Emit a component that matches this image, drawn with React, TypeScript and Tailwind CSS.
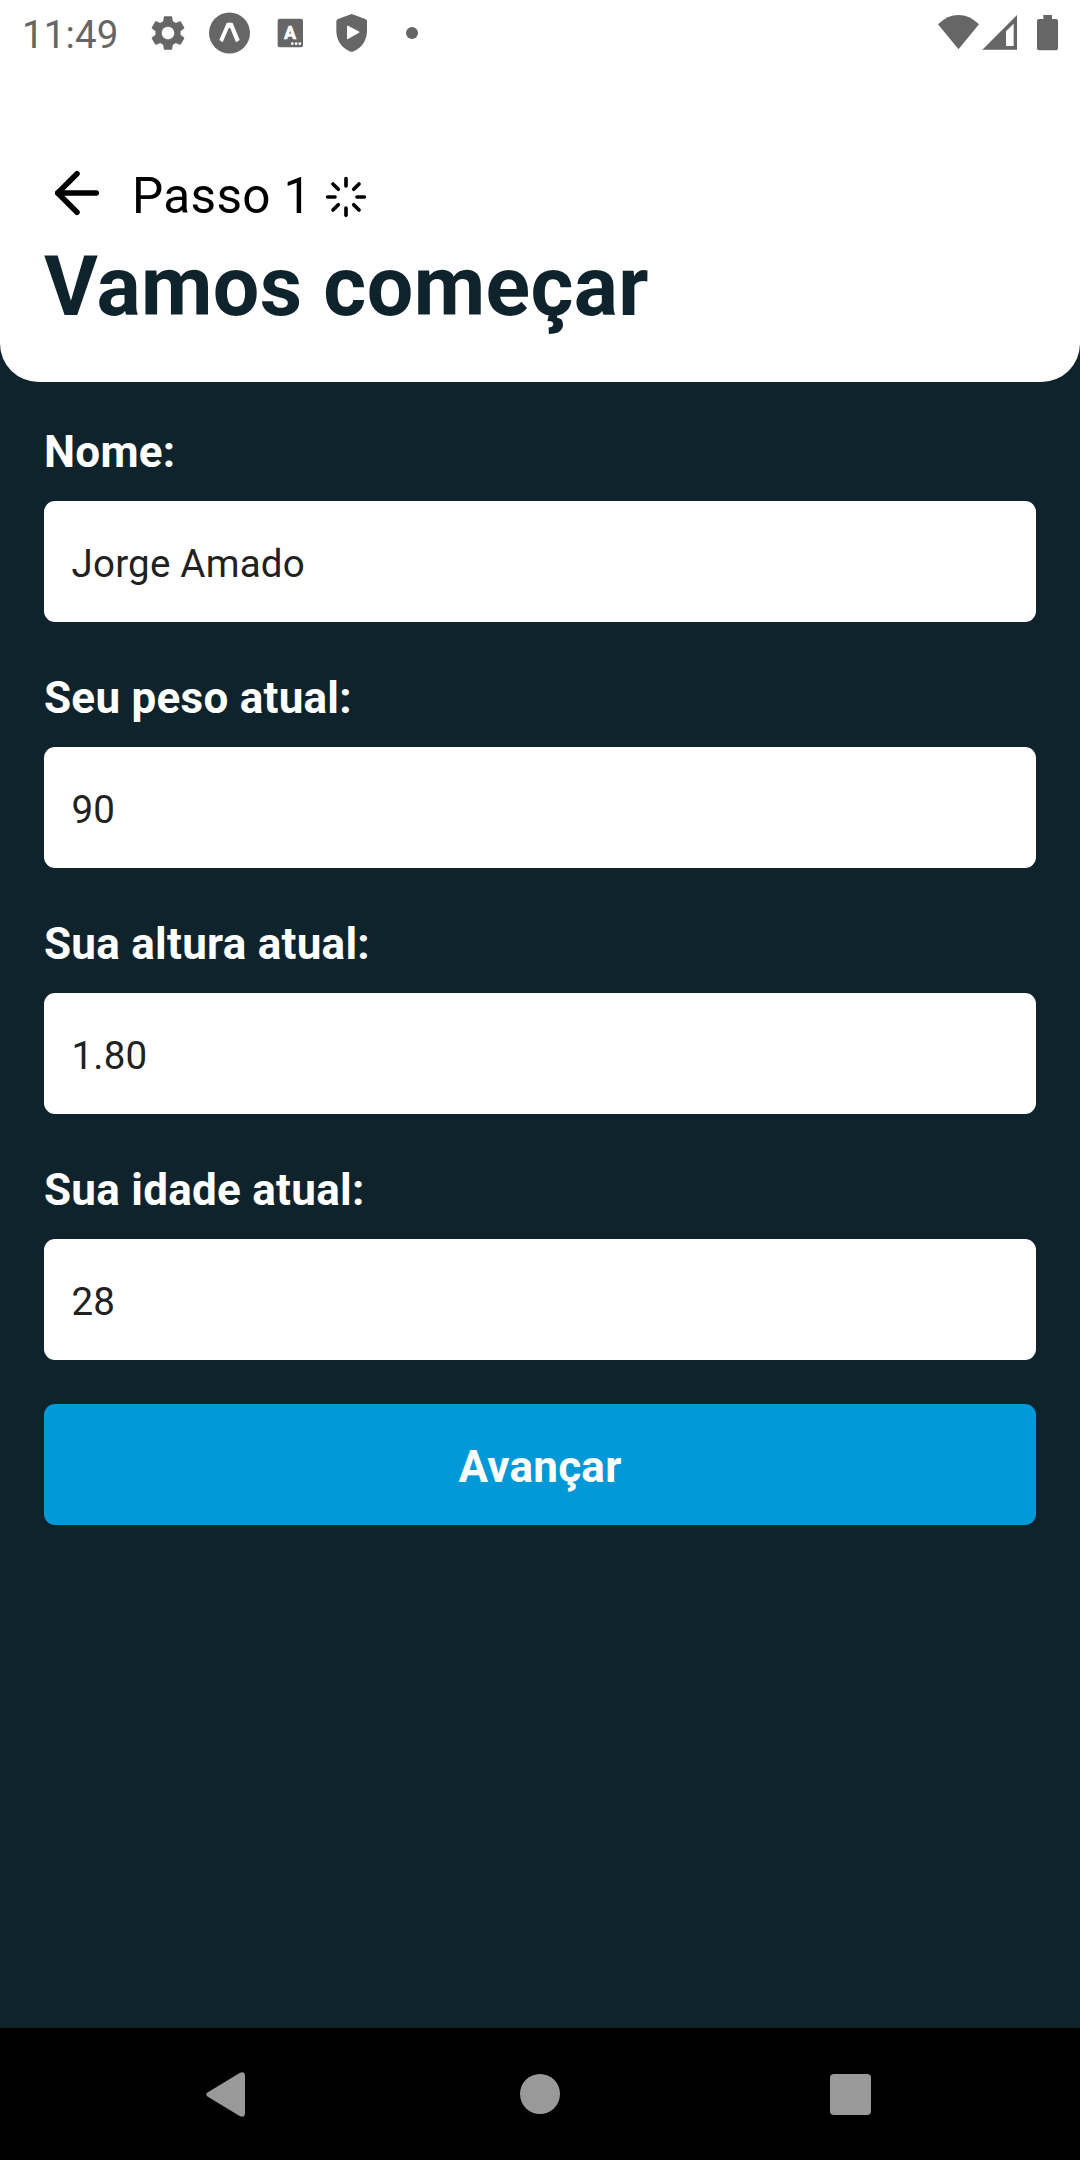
import { useState } from "react";
import { ArrowLeft, Loader } from "lucide-react";
import { MdSettings } from "react-icons/md";

function StatusBar() {
  return (
    <div className="flex h-[66px] items-start justify-between pl-[22px] text-[#666666]">
      <div className="flex h-[66px] items-center">
        <span className="relative top-[2px] w-[125px] text-[38.5px] leading-[46px] tracking-[0.15px]">11:49</span>
        <MdSettings className="h-[42px] w-[42px]" />
        <svg className="ml-5 h-[42px] w-[41px]" viewBox="27 37 123 126">
          <circle cx="88.5" cy="100" r="61.5" fill="currentColor" />
          <path
            d="M80 70 Q89 67 98 70 L119 121 L108 128 L91 86 Q89 82 86 86 L68 128 L58 121 Z"
            fill="white"
          />
        </svg>
        <svg className="ml-[27px] h-[42px] w-[27px]" viewBox="231 37 81 126">
          <rect x="233" y="57" width="76" height="86" rx="6" fill="currentColor" />
          <text
            x="270.5"
            y="118"
            textAnchor="middle"
            fontSize="54"
            fontWeight="700"
            fill="white"
            stroke="white"
            strokeWidth="2"
            strokeLinejoin="round"
            fontFamily="Roboto, sans-serif"
          >
            A
          </text>
          <circle cx="277" cy="132" r="4" fill="white" />
          <circle cx="288.500" cy="132" r="4" fill="white" />
          <circle cx="299.500" cy="132" r="4" fill="white" />
        </svg>
        <svg className="ml-8 h-[42px] w-[31px]" viewBox="407 37 93 126">
          <path
            d="M454 43 L495 58 Q500 60 500 65 V95 Q498 138 460 155 Q454 158 448 155 Q410 138 408 95 V65 Q408 60 413 58 Z"
            fill="currentColor"
          />
          <path d="M442 80 L475 97.500 L442 116 Z" fill="white" stroke="white" strokeWidth="4" strokeLinejoin="round" />
        </svg>
        <span className="ml-[39px] h-3 w-3 rounded-full bg-[#666666]" />
      </div>
      <svg className="h-[66px] w-[160px]" viewBox="0 0 480 198" fill="currentColor">
        <path d="M115.500 148 L54 73 Q82 45 115.500 45 Q149 45 177 73 Z" />
        <path d="M291 45 V149.500 H187 Z M281 71 L258 94 V138 H281 Z" fillRule="evenodd" />
        <path d="M370 45 H396 V57 H408 Q414 57 414 63 V145 Q414 151 408 151 H357 Q351 151 351 145 V63 Q351 57 357 57 H370 Z" />
      </svg>
    </div>
  );
}

function Header() {
  return (
    <header className="h-[382px] rounded-b-[38.5px] bg-white">
      <StatusBar />
      <div className="px-11 pt-[94px]">
        <div className="flex h-[66px] items-center">
          <ArrowLeft className="h-[66px] w-[66px] text-black" strokeWidth={2} />
          <span className="relative top-[3px] ml-[22px] text-[49.5px] leading-[58px] tracking-[0.007em] text-black">
            Passo 1
          </span>
          <Loader className="relative top-[3.5px] ml-3 h-11 w-11 text-black" strokeWidth={2} />
        </div>
        <h1 className="mt-3 text-[82.5px] leading-[98px] font-bold tracking-[0.0045em] text-[#0f232c]">
          Vamos começar
        </h1>
      </div>
    </header>
  );
}

function Field({ label, initial }: { label: string; initial: string }) {
  const [value, setValue] = useState(initial);
  return (
    <label className="flex flex-col gap-[23px]">
      <span className="text-[44px] leading-[52px] font-bold tracking-[0.006em] text-white">{label}</span>
      <input
        className="h-[121px] w-full rounded-[11px] bg-white px-[27.5px] pt-[3px] text-[38.5px] tracking-[0.006em] text-[#212121] outline-none"
        value={value}
        onChange={(e) => setValue(e.target.value)}
      />
    </label>
  );
}

const fields = [
  { label: "Nome:", initial: "Jorge Amado" },
  { label: "Seu peso atual:", initial: "90" },
  { label: "Sua altura atual:", initial: "1.80" },
  { label: "Sua idade atual:", initial: "28" },
];

function NavigationBar() {
  return (
    <nav className="flex h-[132px] items-center bg-black pl-[206px] text-[#999999]">
      <svg className="h-[45px] w-[39px]" viewBox="0 0 39 45" fill="currentColor">
        <path d="M1.500 20.500 L34 0.800 Q39 -1 39 4 V41 Q39 46 34 44.200 L1.500 24.500 Q-1 22.500 1.500 20.500 Z" />
      </svg>
      <span className="ml-[275px] h-10 w-10 rounded-full bg-[#999999]" />
      <span className="ml-[270px] mt-px h-[41px] w-[41px] rounded bg-[#999999]" />
    </nav>
  );
}

export default function App() {
  return (
    <div className="flex h-[2160px] w-[1080px] flex-col bg-[#0f232c] font-['Roboto',sans-serif]">
      <Header />
      <main className="flex flex-1 flex-col px-11 pt-11">
        <div className="flex flex-col gap-[50px]">
          {fields.map((f) => (
            <Field key={f.label} label={f.label} initial={f.initial} />
          ))}
        </div>
        <button className="mt-11 h-[121px] rounded-[11px] bg-[#0099d8] pt-[5px] text-[44px] font-bold tracking-[0.006em] text-white">
          Avançar
        </button>
      </main>
      <NavigationBar />
    </div>
  );
}
